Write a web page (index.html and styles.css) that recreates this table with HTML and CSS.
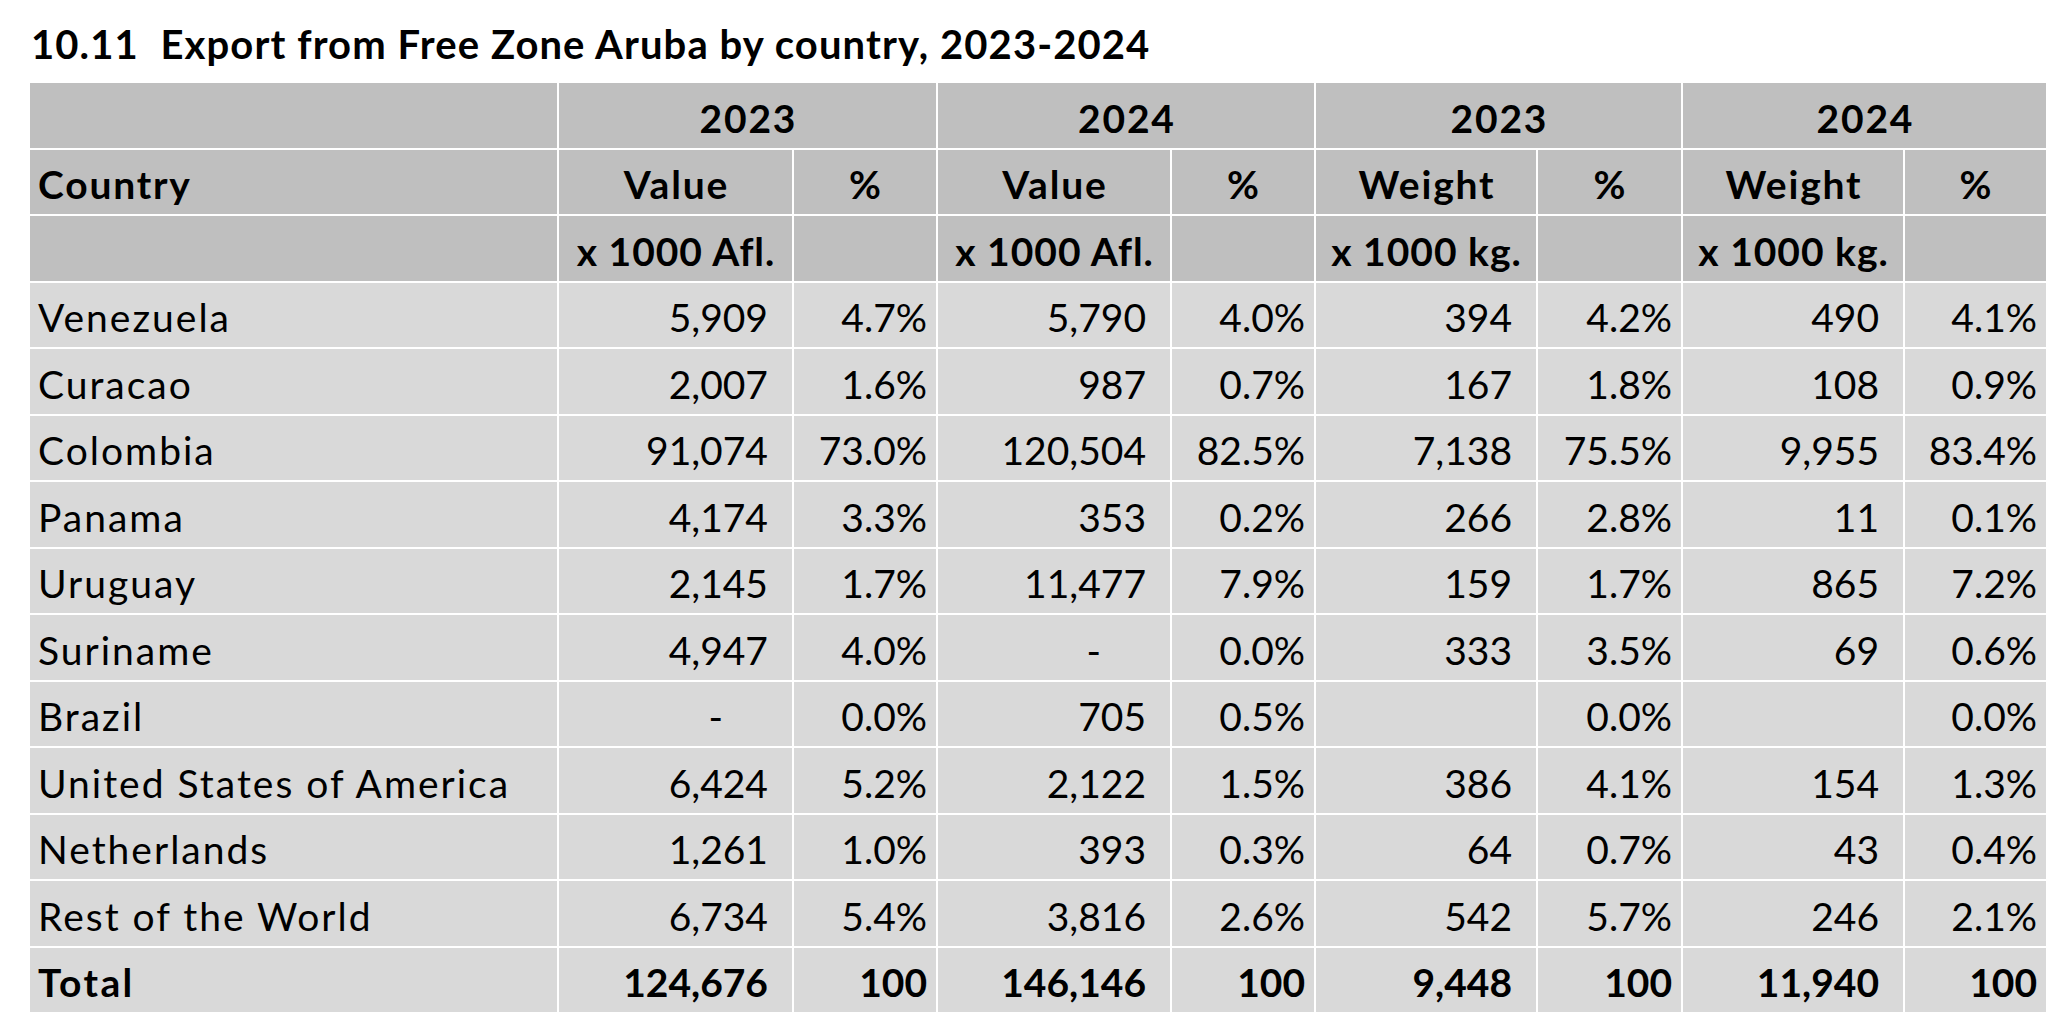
FILE: index.html
```html
<!DOCTYPE html>
<html lang="en">
<head>
<meta charset="utf-8">
<title>10.11 Export from Free Zone Aruba by country, 2023-2024</title>
<link rel="stylesheet" href="styles.css">
</head>
<body>
<div class="page">
  <h1 class="title">10.11&nbsp; Export from Free Zone Aruba by country, 2023-2024</h1>
  <table class="grid">
    <colgroup>
      <col class="c-country">
      <col class="c-val">
      <col class="c-pct">
      <col class="c-val2">
      <col class="c-pct">
      <col class="c-wt">
      <col class="c-pct3">
      <col class="c-wt">
      <col class="c-pct4">
    </colgroup>
    <thead>
      <tr class="hd">
        <th></th>
        <th colspan="2" class="ctr">2023</th>
        <th colspan="2" class="ctr">2024</th>
        <th colspan="2" class="ctr">2023</th>
        <th colspan="2" class="ctr">2024</th>
      </tr>
      <tr class="hd">
        <th class="name">Country</th>
        <th class="ctr">Value</th>
        <th class="ctr">%</th>
        <th class="ctr">Value</th>
        <th class="ctr">%</th>
        <th class="ctr">Weight</th>
        <th class="ctr">%</th>
        <th class="ctr">Weight</th>
        <th class="ctr">%</th>
      </tr>
      <tr class="hd">
        <th></th>
        <th class="ctr unit">x 1000 Afl.</th>
        <th></th>
        <th class="ctr unit">x 1000 Afl.</th>
        <th></th>
        <th class="ctr unit">x 1000 kg.</th>
        <th></th>
        <th class="ctr unit">x 1000 kg.</th>
        <th></th>
      </tr>
    </thead>
    <tbody>
      <tr><td class="name">Venezuela</td><td class="num">5,909</td><td class="pct">4.7%</td><td class="num">5,790</td><td class="pct">4.0%</td><td class="num">394</td><td class="pct">4.2%</td><td class="num">490</td><td class="pct">4.1%</td></tr>
      <tr><td class="name">Curacao</td><td class="num">2,007</td><td class="pct">1.6%</td><td class="num">987</td><td class="pct">0.7%</td><td class="num">167</td><td class="pct">1.8%</td><td class="num">108</td><td class="pct">0.9%</td></tr>
      <tr><td class="name">Colombia</td><td class="num">91,074</td><td class="pct">73.0%</td><td class="num">120,504</td><td class="pct">82.5%</td><td class="num">7,138</td><td class="pct">75.5%</td><td class="num">9,955</td><td class="pct">83.4%</td></tr>
      <tr><td class="name">Panama</td><td class="num">4,174</td><td class="pct">3.3%</td><td class="num">353</td><td class="pct">0.2%</td><td class="num">266</td><td class="pct">2.8%</td><td class="num">11</td><td class="pct">0.1%</td></tr>
      <tr><td class="name">Uruguay</td><td class="num">2,145</td><td class="pct">1.7%</td><td class="num">11,477</td><td class="pct">7.9%</td><td class="num">159</td><td class="pct">1.7%</td><td class="num">865</td><td class="pct">7.2%</td></tr>
      <tr><td class="name">Suriname</td><td class="num">4,947</td><td class="pct">4.0%</td><td class="num dash">-</td><td class="pct">0.0%</td><td class="num">333</td><td class="pct">3.5%</td><td class="num">69</td><td class="pct">0.6%</td></tr>
      <tr><td class="name">Brazil</td><td class="num dash">-</td><td class="pct">0.0%</td><td class="num">705</td><td class="pct">0.5%</td><td class="num"></td><td class="pct">0.0%</td><td class="num"></td><td class="pct">0.0%</td></tr>
      <tr><td class="name">United States of America</td><td class="num">6,424</td><td class="pct">5.2%</td><td class="num">2,122</td><td class="pct">1.5%</td><td class="num">386</td><td class="pct">4.1%</td><td class="num">154</td><td class="pct">1.3%</td></tr>
      <tr><td class="name">Netherlands</td><td class="num">1,261</td><td class="pct">1.0%</td><td class="num">393</td><td class="pct">0.3%</td><td class="num">64</td><td class="pct">0.7%</td><td class="num">43</td><td class="pct">0.4%</td></tr>
      <tr><td class="name">Rest of the World</td><td class="num">6,734</td><td class="pct">5.4%</td><td class="num">3,816</td><td class="pct">2.6%</td><td class="num">542</td><td class="pct">5.7%</td><td class="num">246</td><td class="pct">2.1%</td></tr>
      <tr class="total"><td class="name">Total</td><td class="num">124,676</td><td class="pct">100</td><td class="num">146,146</td><td class="pct">100</td><td class="num">9,448</td><td class="pct">100</td><td class="num">11,940</td><td class="pct">100</td></tr>
    </tbody>
  </table>
</div>
</body>
</html>
```
FILE: styles.css
```css
* {
  box-sizing: border-box;
}

html, body {
  margin: 0;
  padding: 0;
  background: #ffffff;
}

body {
  font-family: Lato, "Liberation Sans", sans-serif;
  color: #000000;
}

.page {
  padding: 21px 0 0 28px;
}

.title {
  margin: 0 0 13px 3px;
  font-size: 40px;
  line-height: 47px;
  font-weight: 700;
  letter-spacing: 1.1px;
  white-space: nowrap;
}

.grid {
  table-layout: fixed;
  width: 2020px;
  border-collapse: separate;
  border-spacing: 2px;
  font-size: 39px;
  line-height: 47px;
}

.c-country { width: 527px; }
.c-val { width: 233px; }
.c-pct { width: 142px; }
.c-val2 { width: 232px; }
.c-wt { width: 220px; }
.c-pct3 { width: 143px; }
.c-pct4 { width: 141px; }

.grid th,
.grid td {
  height: 64.5px;
  padding: 0 0 6px 0;
  vertical-align: bottom;
  white-space: nowrap;
  overflow: hidden;
}

.grid th {
  background: #bfbfbf;
  font-weight: 700;
  letter-spacing: 1.8px;
}

.grid th.ctr {
  text-indent: 1.8px;
}

.grid th.unit {
  letter-spacing: 1px;
  text-indent: 1px;
}

.grid td {
  background: #d9d9d9;
  font-weight: 400;
}

.grid .ctr {
  text-align: center;
}

.grid .name {
  text-align: left;
  padding-left: 8px;
}

.grid td.name {
  letter-spacing: 2px;
}

.grid .total td.name {
  letter-spacing: 2.4px;
}

.grid .num {
  text-align: right;
  padding-right: 24px;
}

.grid .pct {
  text-align: right;
  padding-right: 9px;
}

.grid .dash {
  padding-right: 69px;
}

.grid .total td {
  font-weight: 700;
}
```
